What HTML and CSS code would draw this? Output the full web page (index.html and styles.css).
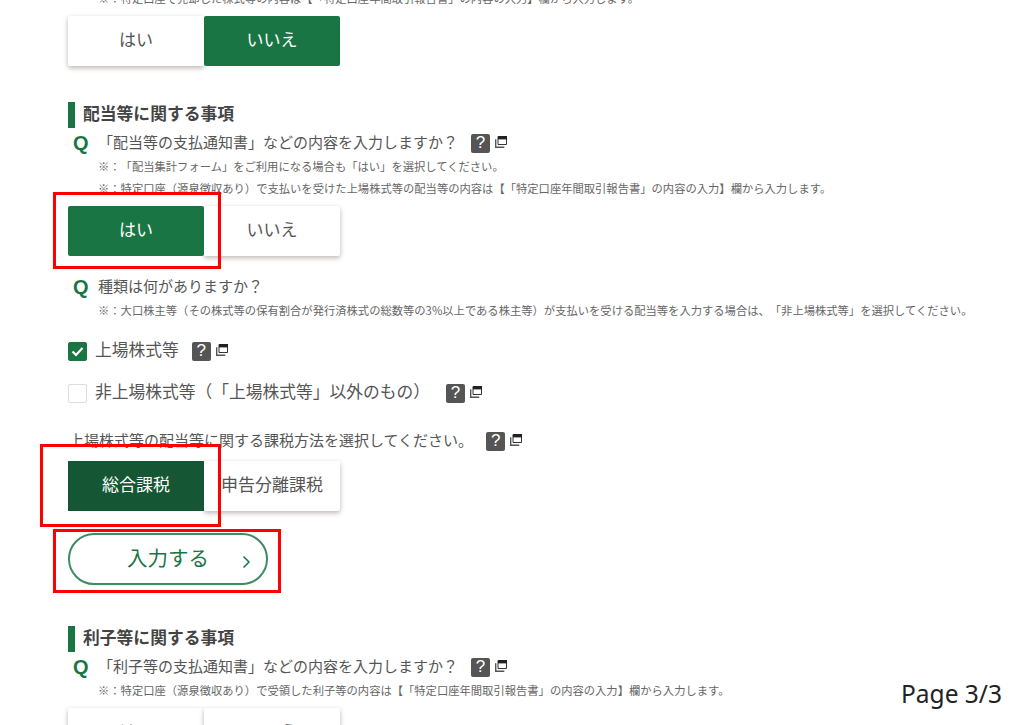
FILE: index.html
```html
<!DOCTYPE html>
<html lang="ja">
<head>
    <meta charset="UTF-8">
    <meta name="viewport" content="width=device-width, initial-scale=1.0">
    <title>配当等に関する事項</title>
    <link rel="stylesheet" href="styles.css">
</head>
<body>
    <svg class="icon-defs" width="0" height="0">
        <symbol id="window" viewBox="0 0 12 12">
            <path d="M3 .5h8.5v8H3z" fill="#fff" stroke="#333" stroke-width="1"/>
            <path d="M3 0h9v3.4H3z" fill="#222"/>
            <path d="M.7 3.2v8.1h8.6" fill="none" stroke="#555" stroke-width="1.4"/>
        </symbol>
    </svg>

    <div class="page">
        <p class="note">※：特定口座で売却した株式等の内容は【「特定口座年間取引報告書」の内容の入力】欄から入力します。</p>
        <div class="toggle">
            <div class="toggle-item raised">はい</div>
            <div class="toggle-item active">いいえ</div>
        </div>

        <h2 class="section-title">配当等に関する事項</h2>
        <div class="question">
            <span class="q-mark">Q</span>
            <span class="label-text">「配当等の支払通知書」などの内容を入力しますか？</span>
            <span class="help">?</span>
            <svg class="window-icon"><use href="#window"/></svg>
        </div>
        <p class="note note-first">※：「配当集計フォーム」をご利用になる場合も「はい」を選択してください。</p>
        <p class="note">※：特定口座（源泉徴収あり）で支払いを受けた上場株式等の配当等の内容は【「特定口座年間取引報告書」の内容の入力】欄から入力します。</p>
        <div class="toggle">
            <div class="toggle-item active">はい</div>
            <div class="toggle-item raised">いいえ</div>
        </div>

        <div class="question question-sub">
            <span class="q-mark">Q</span>
            <span class="label-text">種類は何がありますか？</span>
        </div>
        <p class="note note-sub">※：大口株主等（その株式等の保有割合が発行済株式の総数等の3%以上である株主等）が支払いを受ける配当等を入力する場合は、「非上場株式等」を選択してください。</p>

        <div class="check-row check-row-first">
            <span class="checkbox checked">
                <svg width="13" height="11" viewBox="0 0 13 11"><path d="M1.5 5.5l3.5 3.5 6.5-7" fill="none" stroke="#fff" stroke-width="2.2"/></svg>
            </span>
            <span class="label-text">上場株式等</span>
            <span class="help">?</span>
            <svg class="window-icon"><use href="#window"/></svg>
        </div>
        <div class="check-row">
            <span class="checkbox"></span>
            <span class="label-text">非上場株式等（「上場株式等」以外のもの）</span>
            <span class="help help-far">?</span>
            <svg class="window-icon"><use href="#window"/></svg>
        </div>

        <div class="tax-label">
            <span class="label-text">上場株式等の配当等に関する課税方法を選択してください。</span>
            <span class="help">?</span>
            <svg class="window-icon"><use href="#window"/></svg>
        </div>
        <div class="toggle toggle-tax">
            <div class="toggle-item active dark">総合課税</div>
            <div class="toggle-item raised">申告分離課税</div>
        </div>

        <a class="input-btn">
            <span class="label-text">入力する</span>
            <svg class="input-arrow" width="9" height="14" viewBox="0 0 9 14"><path d="M1.5 1.5L7 7l-5.5 5.5" fill="none" stroke="#1a7544" stroke-width="1.5"/></svg>
        </a>

        <h2 class="section-title section-title-next">利子等に関する事項</h2>
        <div class="question">
            <span class="q-mark">Q</span>
            <span class="label-text">「利子等の支払通知書」などの内容を入力しますか？</span>
            <span class="help">?</span>
            <svg class="window-icon"><use href="#window"/></svg>
        </div>
        <p class="note note-first">※：特定口座（源泉徴収あり）で受領した利子等の内容は【「特定口座年間取引報告書」の内容の入力】欄から入力します。</p>
        <div class="toggle">
            <div class="toggle-item raised">はい</div>
            <div class="toggle-item raised">いいえ</div>
        </div>
    </div>

    <div class="red-box box-yes"></div>
    <div class="red-box box-tax"></div>
    <div class="red-box box-input"></div>
    <div class="page-no">Page 3/3</div>
</body>
</html>
```

FILE: styles.css
```css
html, body {
    margin: 0;
    height: 725px;
    overflow: hidden;
}
body {
    position: relative;
    background-color: white;
    color: #555;
    font-family: 'Noto Sans CJK JP', 'Noto Sans', sans-serif;
    text-spacing-trim: space-all;
}
.icon-defs {
    position: absolute;
}
.page {
    padding-left: 68px;
    margin-top: -13px;
}
.label-text {
    padding-bottom: 4px;
}
.note {
    margin: 0 0 0 30px;
    font-size: 11.3px;
    line-height: 22px;
    color: #666;
    white-space: nowrap;
}
.note-first {
    margin-top: 2px;
}
.note-sub {
    margin-top: 2px;
}
.toggle {
    display: flex;
    width: 272px;
    height: 50px;
    margin-top: 7px;
}
.toggle-tax {
    margin-top: 10px;
}
.toggle-item {
    flex: 1;
    display: flex;
    justify-content: center;
    align-items: center;
    padding-bottom: 6px;
    box-sizing: border-box;
    font-size: 17px;
    border-radius: 2px;
}
.raised {
    background-color: white;
    box-shadow: 0 2px 5px rgba(60,50,40,0.35);
}
.active {
    position: relative;
    background-color: #1a7544;
    color: white;
}
.dark {
    background-color: #155734;
    border-radius: 0;
}
.section-title {
    height: 26px;
    margin: 36px 0 0;
    padding-left: 8px;
    border-left: 7px solid #1a7544;
    box-sizing: border-box;
    font-size: 16.8px;
    line-height: 22px;
    font-weight: bold;
    color: #444;
}
.section-title-next {
    margin-top: 41px;
}
.question {
    display: flex;
    align-items: center;
    height: 20px;
    margin-top: 5px;
    font-size: 15px;
    white-space: nowrap;
}
.question-sub {
    margin-top: 21px;
}
.q-mark {
    width: 30px;
    padding-left: 5px;
    box-sizing: border-box;
    font-family: 'Liberation Sans', sans-serif;
    font-size: 20px;
    font-weight: bold;
    color: #1a7544;
}
.help {
    display: flex;
    justify-content: center;
    align-items: center;
    width: 19px;
    height: 19px;
    margin-left: 13px;
    border-radius: 2px;
    background-color: #555;
    color: white;
    font-family: 'Liberation Sans', sans-serif;
    font-size: 17px;
}
.window-icon {
    width: 12px;
    height: 12px;
    margin-left: 5px;
    margin-top: -2px;
}
.check-row {
    display: flex;
    align-items: center;
    height: 20px;
    margin-top: 22px;
    font-size: 16.75px;
    white-space: nowrap;
}
.check-row-first {
    margin-top: 20px;
}
.checkbox {
    display: flex;
    justify-content: center;
    align-items: center;
    width: 19px;
    height: 19px;
    margin-right: 8px;
    box-sizing: border-box;
    border: 1px solid #ddd;
    border-radius: 2px;
}
.checked {
    background-color: #1a7544;
    border-color: #1a7544;
}
.help-far {
    margin-left: 16px;
}
.tax-label {
    display: flex;
    align-items: center;
    height: 20px;
    margin-top: 28px;
    padding-left: 1px;
    font-size: 15px;
    white-space: nowrap;
}
.input-btn {
    position: relative;
    display: flex;
    align-items: center;
    width: 200px;
    height: 52px;
    margin-top: 22px;
    padding-left: 57px;
    box-sizing: border-box;
    border: 2px solid #3d8c63;
    border-radius: 26px;
    color: #1a7544;
    font-size: 20.5px;
}
.input-arrow {
    margin-left: 33px;
    margin-top: 6px;
}
.red-box {
    position: absolute;
    box-sizing: border-box;
    border: 3px solid #f00;
}
.box-yes {
    left: 53px;
    top: 192px;
    width: 168px;
    height: 77px;
}
.box-tax {
    left: 40px;
    top: 444px;
    width: 181px;
    height: 83px;
}
.box-input {
    left: 53px;
    top: 529px;
    width: 228px;
    height: 64px;
}
.page-no {
    position: absolute;
    right: 22px;
    top: 677px;
    font-family: 'Noto Sans', sans-serif;
    font-size: 24.5px;
    color: #222;
}
```
